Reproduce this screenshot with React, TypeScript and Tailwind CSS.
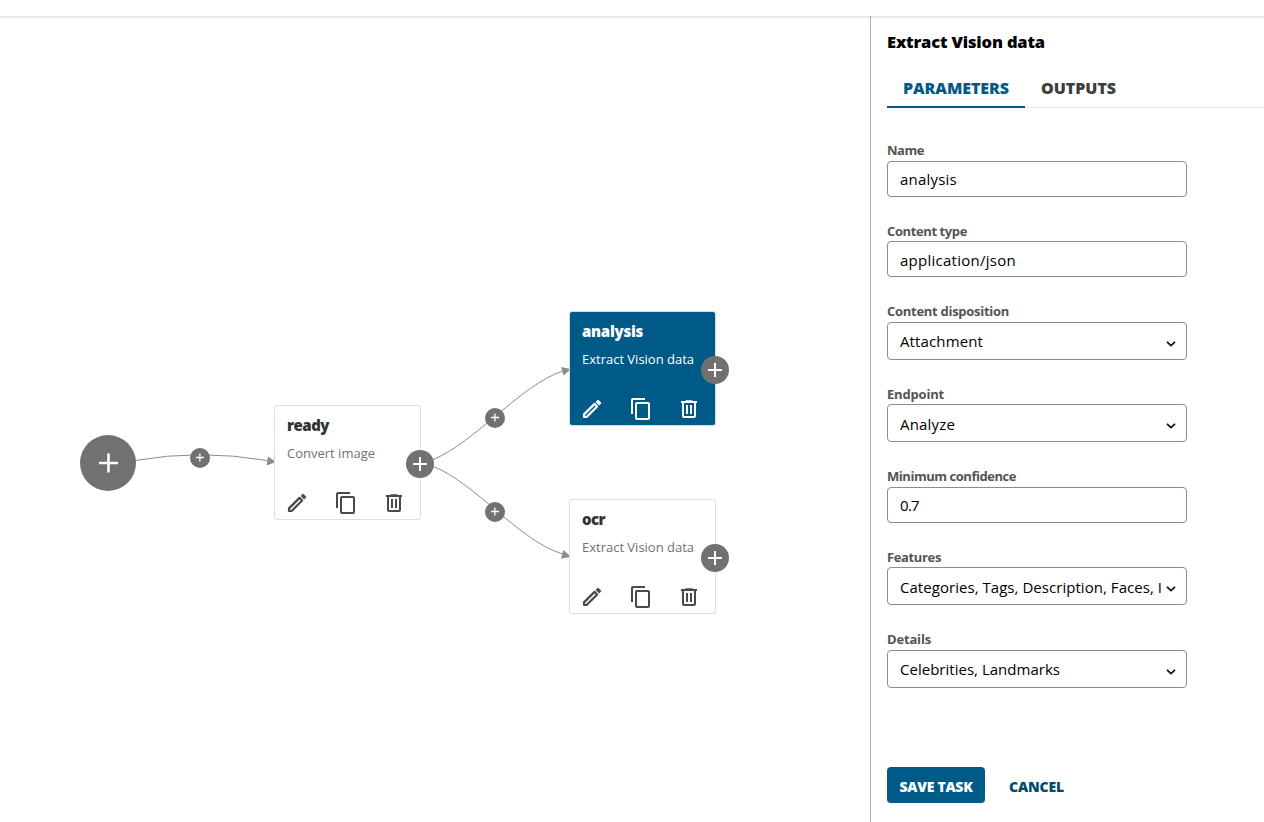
import React from "react";

const sans = "font-['Open_Sans','Noto_Sans',sans-serif]";

function Fit({ text, width, className = "" }: { text: string; width: number; className?: string }) {
  const ref = React.useRef<HTMLSpanElement>(null);
  React.useLayoutEffect(() => {
    const el = ref.current;
    if (!el) return;
    el.style.letterSpacing = "0px";
    const natural = el.getBoundingClientRect().width;
    el.style.letterSpacing = `${(width - natural) / text.length}px`;
  }, [text, width]);
  return (
    <span ref={ref} className={`inline-block whitespace-nowrap ${className}`}>
      {text}
    </span>
  );
}

function Pencil() {
  return (
    <svg viewBox="0 0 24 24" className="size-6" fill="none" stroke="currentColor" strokeWidth="2.2" strokeLinejoin="round">
      <path d="M4 20V17.4L14.5 6.9L17.1 9.5L6.6 20Z" />
      <path d="M16.8 3.7L20.3 7.2" strokeWidth="3.4" />
    </svg>
  );
}

function Copy() {
  return (
    <svg viewBox="0 0 24 24" className="size-6" fill="currentColor">
      <path d="M16 1H4a2 2 0 0 0-2 2v14h2V3h12V1zm3 4H8a2 2 0 0 0-2 2v14a2 2 0 0 0 2 2h11a2 2 0 0 0 2-2V7a2 2 0 0 0-2-2zm0 16H8V7h11v14z" />
    </svg>
  );
}

function Trash() {
  return (
    <svg viewBox="0 0 24 24" className="size-6" fill="currentColor">
      <path d="M8.5 3.2V4.1H4V6h1v13a2 2 0 0 0 2 2h10a2 2 0 0 0 2-2V6h1V4.1h-4.5V3.2H8.5zM7 6h10v13H7V6zm2 2v9h2V8H9zm4 0v9h2V8h-2z" />
    </svg>
  );
}

function Plus({ place, d, stroke }: { place: string; d: string; stroke: number }) {
  return (
    <button className={`absolute flex items-center justify-center rounded-full bg-[#717171] text-white ${place}`}>
      <svg viewBox="-12 -12 24 24" className="size-6 shrink-0" stroke="currentColor" strokeWidth={stroke}>
        <path d={d} />
      </svg>
    </button>
  );
}

const bigPlus = "M-9 0H10M0.5 -9.5V9.5";
const midPlus = "M-7 0H7M0 -7V7";
const tinyPlus = "M-4 -0.5H4M-0.1 -4.5V3.5";

type NodeProps = { title: string; titleWidth: number; subtitle: string; subtitleWidth: number; place: string; active?: boolean };

function TaskNode({ title, titleWidth, subtitle, subtitleWidth, place, active }: NodeProps) {
  const tone = active ? "border-[#cfe0ea] bg-[#005a87] text-white" : "border-[#dedede] bg-white text-[#4a4a4a]";
  return (
    <article className={`absolute flex h-[115px] w-[147px] flex-col rounded-[3px] border pl-3 ${tone} ${place}`}>
      <h3 className={`mt-[9px] text-[15px] leading-5 font-extrabold ${active ? "" : "text-[#333]"}`}>
        <Fit text={title} width={titleWidth} />
      </h3>
      <p className={`mt-[8px] text-[13px] leading-5 ${active ? "" : "text-[#717171]"}`}>
        <Fit text={subtitle} width={subtitleWidth} />
      </p>
      <div className="mt-[28px] -ml-[2px] flex gap-[24.5px]">
        <Pencil />
        <Copy />
        <Trash />
      </div>
    </article>
  );
}

type FieldProps = { label: string; labelWidth: number; value: string; valueWidth: number; gap: string; space: string; nudge?: string; select?: boolean };

function Field({ label, labelWidth, value, valueWidth, gap, space, nudge = "", select }: FieldProps) {
  return (
    <div className={`flex flex-col ${gap}`}>
      <label className="text-[13px] leading-4 font-bold text-[#545454]">
        <Fit text={label} width={labelWidth} />
      </label>
      <div
        className={`flex w-[300px] items-center justify-between rounded-[4px] border border-[#8c8c8c] pr-[9px] pl-3 text-[15px] text-black ${space} ${select ? "h-[38px]" : "h-9"}`}
      >
        <span className={`overflow-hidden leading-6 ${nudge}`}>
          <Fit text={value} width={valueWidth} />
        </span>
        {select && (
          <svg viewBox="0 0 12 12" className="mt-[5px] size-3 shrink-0" fill="none" stroke="#111" strokeWidth="1.8">
            <path d="M2 3.8L6 7.6L10 3.8" />
          </svg>
        )}
      </div>
    </div>
  );
}

export default function App() {
  return (
    <div className={`flex h-[822px] w-[1264px] flex-col overflow-hidden bg-white ${sans}`}>
      <header className="relative h-4 shrink-0 bg-white shadow-[0_1px_3px_rgba(0,0,0,0.16)]" />
      <div className="flex min-h-0 flex-1">
        <main className="relative w-[870px] shrink-0">
          <svg viewBox="0 16 870 806" className="absolute inset-0 h-[806px] w-[870px]" fill="none" stroke="#8c8c8c">
            <path d="M135 460.5Q200 449 267 460.5" />
            <path d="M432 460C475 443 520 385 563 371" />
            <path d="M432 466C475 482 520 542 563 554" />
            <g fill="#8c8c8c" stroke="none">
              <path d="M276 462L266.5 465.5L268 456.5Z" />
              <path d="M571 369L563.5 375.5L561 367Z" />
              <path d="M571 557L561 558.5L563.5 550Z" />
            </g>
          </svg>
          <TaskNode title="ready" titleWidth={42} subtitle="Convert image" subtitleWidth={88} place="left-[274px] top-[389px]" />
          <TaskNode title="analysis" titleWidth={61} subtitle="Extract Vision data" subtitleWidth={112} place="left-[569px] top-[295px]" active />
          <TaskNode title="ocr" titleWidth={23} subtitle="Extract Vision data" subtitleWidth={112} place="left-[569px] top-[483px]" />
          <Plus place="left-[80px] top-[419px] size-14" d={bigPlus} stroke={2.6} />
          <Plus place="left-[190px] top-[432px] size-5" d={tinyPlus} stroke={1.3} />
          <Plus place="left-[485px] top-[392px] size-5" d={tinyPlus} stroke={1.3} />
          <Plus place="left-[485px] top-[486px] size-5" d={tinyPlus} stroke={1.3} />
          <Plus place="left-[406px] top-[434px] size-7" d={midPlus} stroke={2} />
          <Plus place="left-[701px] top-[340px] size-7" d={midPlus} stroke={2} />
          <Plus place="left-[701px] top-[528px] size-7" d={midPlus} stroke={2} />
        </main>
        <aside className="flex flex-1 flex-col border-l border-[#b3b3b3] pl-4">
          <h2 className="mt-[14px] text-[16.5px] leading-6 font-extrabold text-black">
            <Fit text="Extract Vision data" width={158} />
          </h2>
          <nav className="mt-[14px] flex h-10 border-b border-[#e8e8e8] text-[16px] leading-6 font-extrabold">
            <button className="flex h-10 w-[138px] items-start border-b-2 border-[#005a87] pt-2 pl-4 text-[#005a87]">
              <Fit text="PARAMETERS" width={106} />
            </button>
            <button className="flex h-10 items-start pt-2 pl-4 text-[#3d3d3d]">
              <Fit text="OUTPUTS" width={75} />
            </button>
          </nav>
          <Field label="Name" labelWidth={37} value="analysis" valueWidth={57} gap="mt-[34px]" space="mt-[3px]" />
          <Field label="Content type" labelWidth={80} value="application/json" valueWidth={116} gap="mt-[26px]" space="mt-[2px]" nudge="mt-[2px]" />
          <Field label="Content disposition" labelWidth={122} value="Attachment" valueWidth={83} gap="mt-[26px]" space="mt-[3px]" select />
          <Field label="Endpoint" labelWidth={57} value="Analyze" valueWidth={55} gap="mt-[26px]" space="mt-[2px]" nudge="mt-[2px]" select />
          <Field label="Minimum confidence" labelWidth={129} value="0.7" valueWidth={19} gap="mt-[26px]" space="mt-[3px]" />
          <Field label="Features" labelWidth={54} value="Categories, Tags, Description, Faces, I" valueWidth={262} gap="mt-[26px]" space="mt-[2px]" nudge="mt-[2px]" select />
          <Field label="Details" labelWidth={44} value="Celebrities, Landmarks" valueWidth={160} gap="mt-[26px]" space="mt-[3px]" select />
          <div className="mt-[79px] flex text-[14px] leading-5 font-extrabold">
            <button className="flex h-9 w-[98px] items-center justify-center rounded-[4px] bg-[#005a87] pt-[3px] text-white">
              <Fit text="SAVE TASK" width={73} />
            </button>
            <button className="ml-6 flex h-9 items-center pt-[3px] text-[#004b6b]">
              <Fit text="CANCEL" width={55} />
            </button>
          </div>
        </aside>
      </div>
    </div>
  );
}
